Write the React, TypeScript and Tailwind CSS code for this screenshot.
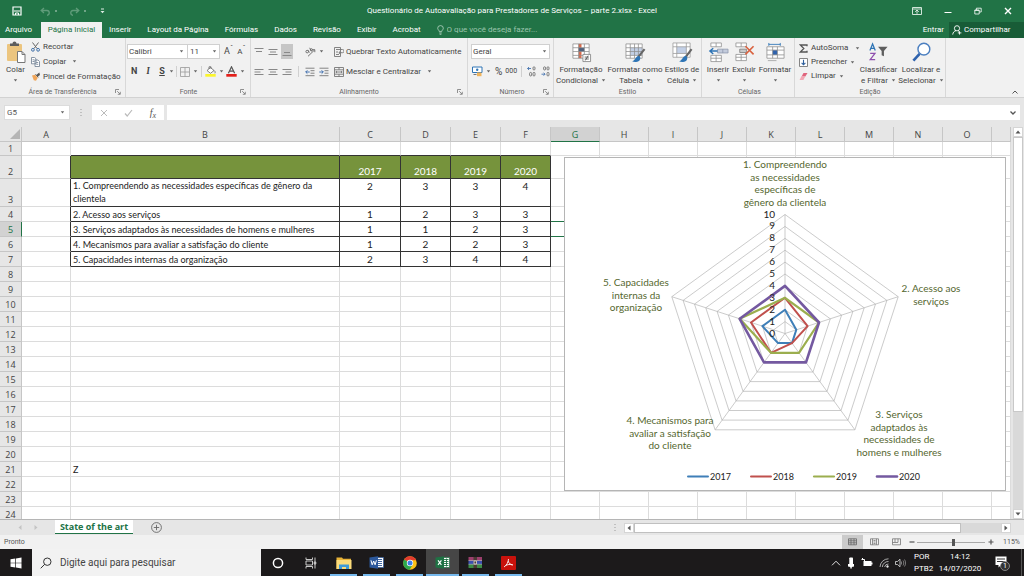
import type { ReactNode } from 'react';
import { useState } from 'react';
import clsx from 'clsx';

const MENU_TABS = ['Inserir', 'Layout da Página', 'Fórmulas', 'Dados', 'Revisão', 'Exibir', 'Acrobat'];
const YEARS = ['2017', '2018', '2019', '2020'];

const INDICATORS = [
  { label: '1. Compreendendo as necessidades específicas de gênero da clientela', values: [2, 3, 3, 4] },
  { label: '2. Acesso aos serviços', values: [1, 2, 3, 3] },
  { label: '3. Serviços adaptados às necessidades de homens e mulheres', values: [1, 1, 2, 3] },
  { label: '4. Mecanismos para avaliar a satisfação do cliente', values: [1, 2, 2, 3] },
  { label: '5. Capacidades internas da organização', values: [2, 3, 4, 4] },
];

const COLUMNS = [
  { name: 'A', width: 'w-[49px]' },
  { name: 'B', width: 'w-[269px]' },
  { name: 'C', width: 'w-[61px]' },
  { name: 'D', width: 'w-[50px]' },
  { name: 'E', width: 'w-[50px]' },
  { name: 'F', width: 'w-[50px]' },
  { name: 'G', width: 'w-[49px]' },
  { name: 'H', width: 'w-[49px]' },
  { name: 'I', width: 'w-[49px]' },
  { name: 'J', width: 'w-[49px]' },
  { name: 'K', width: 'w-[49px]' },
  { name: 'L', width: 'w-[49px]' },
  { name: 'M', width: 'w-[49px]' },
  { name: 'N', width: 'w-[49px]' },
  { name: 'O', width: 'w-[49px]' },
  { name: '', width: '' },
];

const ROWS = Array.from({ length: 24 }, (_, i) => i + 1);

/* ---------- small shared pieces ---------- */

function Caret({ className = '' }: { className?: string }) {
  return (
    <svg viewBox="0 0 5 3" className={clsx('h-[3px] w-[5px] shrink-0', className)} aria-hidden="true">
      <path d="M0.8 0.3h3.4L2.5 2.4z" fill="#666" />
    </svg>
  );
}

function Launcher() {
  return (
    <button type="button" aria-label="Mais opções" className="absolute right-1 bottom-[2px]">
      <svg viewBox="0 0 6 6" className="size-[6px]" fill="none" stroke="#777" strokeWidth="0.8">
        <path d="M0.5 4V0.5H4M2.2 2.2L5 5M5.3 2.8v2.5H2.8" />
      </svg>
    </button>
  );
}

function Group({ label, className, launcher = false, children }: {
  label: string;
  className: string;
  launcher?: boolean;
  children: ReactNode;
}) {
  return (
    <section className={clsx('relative flex shrink-0 flex-col border-r border-[#d8d8d8]', className)}>
      <div className="flex h-[49px] shrink-0 items-start pt-px">{children}</div>
      <p className="text-center text-[7px] leading-[10px] text-[#666]">{label}</p>
      {launcher && <Launcher />}
    </section>
  );
}

function IconButton({ label, caret = false, active = false, children }: {
  label: string;
  caret?: boolean;
  active?: boolean;
  children: ReactNode;
}) {
  return (
    <button
      type="button"
      aria-label={label}
      className={clsx('flex h-[15px] shrink-0 items-center justify-center gap-[3px] px-px', active && 'bg-[#c6c6c6]')}
    >
      {children}
      {caret && <Caret />}
    </button>
  );
}

function BigButton({ lines, icon, className }: {
  lines: string[];
  icon: ReactNode;
  className: string;
}) {
  return (
    <button type="button" className={clsx('flex shrink-0 flex-col items-center text-[8px] leading-[11px] whitespace-nowrap', className)}>
      <span className="mb-px flex h-[22px] items-center">{icon}</span>
      {lines.map((line, i) => (
        <span key={line} className="flex items-center gap-[3px]">
          {line}
          {i > 0 && <Caret />}
        </span>
      ))}
      {lines.length === 1 && <Caret className="mt-1" />}
    </button>
  );
}

function AlignIcon({ rows }: { rows: string }) {
  return (
    <svg viewBox="0 0 10 10" className="size-[10px]" stroke="#888" strokeWidth="1" fill="none">
      <path d={rows} />
    </svg>
  );
}

function GridGlyph({ children }: { children?: ReactNode }) {
  return (
    <svg viewBox="0 0 22 22" className="size-[21px]" fill="none">
      {children}
    </svg>
  );
}

/* ---------- title bar + tabs ---------- */

function TitleBar() {
  return (
    <div className="grid h-[22px] grid-cols-[1fr_auto_1fr] items-center text-[8px] text-white">
      <div className="flex items-center pl-3">
        <button type="button" aria-label="Salvar">
          <svg viewBox="0 0 10 10" className="size-[10px]" fill="none" stroke="#fff">
            <path d="M1 1h8v8H1z" strokeWidth="1.2" />
            <path d="M2 5h6M3.5 9V7h3v2" />
          </svg>
        </button>
        <button type="button" aria-label="Desfazer" className="ml-[18px] flex items-center gap-1 opacity-35">
          <svg viewBox="0 0 11 9" className="h-[9px] w-[11px]" fill="none" stroke="#d5e8dc" strokeWidth="1.3">
            <path d="M4 1L1.2 3.5L4 6M1.5 3.5H7c3 0 3 4.5 0 4.8" />
          </svg>
          <span className="size-[2px] bg-white" />
        </button>
        <button type="button" aria-label="Refazer" className="ml-3 flex items-center gap-1 opacity-35">
          <svg viewBox="0 0 11 9" className="h-[9px] w-[11px]" fill="none" stroke="#d5e8dc" strokeWidth="1.3">
            <path d="M7 1l2.8 2.5L7 6M9.5 3.5H4C1 3.5 1 8 4 8.3" />
          </svg>
          <span className="size-[2px] bg-white" />
        </button>
        <button type="button" aria-label="Personalizar barra" className="ml-[14px]">
          <svg viewBox="0 0 5 6" className="h-[6px] w-[5px]" fill="#dcebe2">
            <path d="M1 0.5h3v1H1zM0.5 3h4L2.5 5.2z" />
          </svg>
        </button>
      </div>
      <h1>Questionário de Autoavaliação para Prestadores de Serviços – parte 2.xlsx - Excel</h1>
      <div className="flex items-center justify-end gap-[22px] pr-3">
        <button type="button" aria-label="Opções da faixa de opções">
          <svg viewBox="0 0 10 8" className="h-2 w-[10px]" fill="none" stroke="#e4f0e9" strokeWidth="0.9">
            <path d="M0.5 0.5h9v7h-9zM0.5 2h9M5 6.8V3.2M3.2 4.8L5 3l1.8 1.8" />
          </svg>
        </button>
        <button type="button" aria-label="Minimizar">
          <svg viewBox="0 0 8 8" className="size-2" stroke="#fff"><path d="M0.5 5.5h7" /></svg>
        </button>
        <button type="button" aria-label="Restaurar">
          <svg viewBox="0 0 8 8" className="size-2" fill="none" stroke="#fff" strokeWidth="0.8">
            <path d="M0.8 3h4.4v4H0.8zM2.4 3V1.2h4.8V5H5.2M0.8 3.4h4.4" />
          </svg>
        </button>
        <button type="button" aria-label="Fechar">
          <svg viewBox="0 0 8 8" className="size-2" stroke="#fff" strokeWidth="1.4"><path d="M1 1l6 6M7 1L1 7" /></svg>
        </button>
      </div>
    </div>
  );
}

function TabBar() {
  return (
    <nav className="flex h-4 items-stretch text-[8px] text-white">
      <button type="button" className="w-[41px] pr-1">Arquivo</button>
      <button type="button" className="w-[61px] bg-[#f1f1f1] text-[#217346]">Página Inicial</button>
      <div className="flex items-center gap-4 pl-[7px]">
        {MENU_TABS.map((tab) => (
          <button key={tab} type="button">{tab}</button>
        ))}
      </div>
      <label className="ml-4 flex items-center gap-[3px]">
        <svg viewBox="0 0 7 10" className="h-[10px] w-[7px]" fill="none" stroke="#b9d6c5" strokeWidth="0.8">
          <path d="M2.3 6.6C2.3 5.3 0.7 4.8 0.7 3.2a2.8 2.6 0 0 1 5.6 0C6.3 4.8 4.7 5.3 4.7 6.6zM2.3 8h2.4M2.6 9.3h1.8" />
        </svg>
        <input
          aria-label="O que você deseja fazer"
          placeholder="O que você deseja fazer..."
          className="w-28 bg-transparent outline-none placeholder:text-[#9cc5ad]"
        />
      </label>
      <button type="button" className="ml-auto pr-[5px]">Entrar</button>
      <button type="button" className="flex w-[75px] items-center gap-[2px] bg-[#185c37] pl-[3px]">
        <svg viewBox="0 0 10 10" className="size-[10px]" fill="none" stroke="#fff" strokeWidth="0.9">
          <circle cx="5" cy="3.3" r="2.6" />
          <path d="M0.7 9.6c0.3-2.3 1.6-3.7 3.3-3.9M6 5.7l1 0.6M7.5 6.2v3.4M5.8 7.9h3.6" />
        </svg>
        Compartilhar
      </button>
    </nav>
  );
}

/* ---------- ribbon ---------- */

function ClipboardGroup() {
  return (
    <Group label="Área de Transferência" className="w-[126px]" launcher>
      <BigButton
        className="ml-1 w-[23px] pt-[2px]"
        lines={['Colar']}
        icon={
          <svg viewBox="0 0 20 22" className="h-[22px] w-5" fill="none">
            <rect x="1" y="3" width="15" height="17" rx="1" fill="#ecc57f" />
            <path d="M4 5V2.5h2.5a2 2 0 0 1 4 0H13V5z" fill="#5d5d5d" />
            <path d="M11.5 10.5h4.5l3 3v8h-7.5z" fill="#fff" stroke="#777" />
            <path d="M16 10.5v3h3" stroke="#777" />
          </svg>
        }
      />
      <div className="ml-1 flex flex-col text-[8px] leading-[15px]">
        <button type="button" className="flex items-center gap-[3px] whitespace-nowrap">
          <svg viewBox="0 0 9 10" className="h-[10px] w-[9px]" fill="none" strokeWidth="1">
            <path d="M1.5 0.5l4.5 6M7.5 0.5L3 6.5" stroke="#666" />
            <circle cx="1.9" cy="7.8" r="1.4" stroke="#3f6fa8" />
            <circle cx="7.1" cy="7.8" r="1.4" stroke="#3f6fa8" />
          </svg>
          Recortar
        </button>
        <button type="button" className="flex items-center gap-[3px] whitespace-nowrap">
          <svg viewBox="0 0 9 10" className="h-[10px] w-[9px]" fill="#fff" stroke="#6b7b8f" strokeWidth="0.8">
            <path d="M0.5 0.5h3.2l1.3 1.3v5H0.5zM4 3h3l1.5 1.5v5H4z" />
            <path d="M5.2 5.5h2M5.2 7.3h2M1.5 2.8h2M1.5 4.5h2" />
          </svg>
          Copiar
          <Caret className="ml-[3px]" />
        </button>
        <button type="button" className="flex items-center gap-[3px] whitespace-nowrap">
          <svg viewBox="0 0 9 10" className="h-[10px] w-[9px]">
            <path d="M5.5 2.8L8.3 0.6L9 3L6.6 4.8z" fill="#555" />
            <path d="M1 3.5l3-0.8l2.8 3L5 8.8L2.8 8.2z" fill="#f0a65a" />
            <path d="M4.5 2.3l2.8 3" stroke="#555" strokeWidth="1" />
          </svg>
          Pincel de Formatação
        </button>
      </div>
    </Group>
  );
}

function FontGroup() {
  return (
    <Group label="Fonte" className="w-[125px] pl-px" launcher>
      <div className="flex flex-col gap-[5px] pt-[5px] text-[8px]">
        <div className="flex items-center">
          <label className="relative flex h-[15px] w-[61px] items-center border border-[#d0d0d0] bg-white">
            <select aria-label="Fonte" className="w-full appearance-none pl-px leading-[13px] outline-none">
              <option>Calibri</option>
            </select>
            <Caret className="absolute right-[3px]" />
          </label>
          <label className="relative flex h-[15px] w-8 items-center border border-l-0 border-[#d0d0d0] bg-white">
            <select aria-label="Tamanho da fonte" className="w-full appearance-none pl-[2px] leading-[13px] outline-none">
              <option>11</option>
            </select>
            <Caret className="absolute right-[2px]" />
          </label>
          <button type="button" aria-label="Aumentar fonte" className="ml-1 text-[9px] leading-[15px]">
            A<sup className="text-[7px]">ˆ</sup>
          </button>
          <button type="button" aria-label="Diminuir fonte" className="ml-1 text-[8px] leading-[15px]">
            A<sup className="text-[7px]">ˇ</sup>
          </button>
        </div>
        <div className="flex items-center pl-1">
          <button type="button" className="w-[6px] text-[9px] font-bold">N</button>
          <button type="button" className="ml-2 w-[6px] font-serif text-[9px] font-bold italic">I</button>
          <button type="button" className="ml-2 w-[6px] text-[9px] font-bold underline">S</button>
          <Caret className="ml-1" />
          <span className="mx-[2px] h-[11px] w-px bg-[#d0d0d0]" />
          <IconButton label="Bordas" caret>
            <svg viewBox="0 0 10 10" className="size-[10px]" fill="none" stroke="#999" strokeWidth="0.8">
              <path d="M0.5 0.5h9v9h-9zM5 0.5v9M0.5 5h9" />
            </svg>
          </IconButton>
          <span className="mx-[2px] h-[11px] w-px bg-[#d0d0d0]" />
          <IconButton label="Cor de preenchimento" caret>
            <svg viewBox="0 0 11 11" className="size-[11px]" fill="none">
              <path d="M2 4.5L5.5 1.5L9 4.5L5.5 7.3z" fill="#fff" stroke="#666" strokeWidth="0.8" />
              <path d="M4 3V0.8h2V3M9.3 4.5c1 1 1 2 .6 2.8" stroke="#666" strokeWidth="0.8" />
              <path d="M0.3 8h10.4v2.7H0.3z" fill="#fbf52c" />
            </svg>
          </IconButton>
          <IconButton label="Cor da fonte" caret>
            <svg viewBox="0 0 11 11" className="size-[11px]" fill="none">
              <path d="M2.4 7.2L5.5 0.8L8.6 7.2M3.6 5.2h3.8" stroke="#555" strokeWidth="1.2" />
              <path d="M0.3 8h10.4v2.7H0.3z" fill="#e3201b" />
            </svg>
          </IconButton>
        </div>
      </div>
    </Group>
  );
}

function AlignmentGroup() {
  return (
    <Group label="Alinhamento" className="w-[217px]" launcher>
      <div className="flex flex-col gap-[5px] pt-[5px] pl-[2px] text-[8px]">
        <div className="flex items-center gap-[2px]">
          <IconButton label="Alinhar em cima"><AlignIcon rows="M0.5 1.5h9M2 4.5h6" /></IconButton>
          <IconButton label="Alinhar no meio"><AlignIcon rows="M0.5 2.5h9M2 5h6M0.5 7.5h9" /></IconButton>
          <IconButton label="Alinhar embaixo" active><AlignIcon rows="M2 5.5h6M0.5 8.5h9" /></IconButton>
          <span className="mx-[3px] h-[11px] w-px" />
          <IconButton label="Orientação" caret>
            <svg viewBox="0 0 11 10" className="h-[10px] w-[11px]" fill="none" stroke="#666" strokeWidth="0.9">
              <path d="M3 9.3L9.5 3M7.3 2.7l2.5 0v2.5" />
              <circle cx="2.2" cy="4.6" r="1.3" />
              <path d="M3 3.2l1.4 2.4M4.6 0.8l2 3.4" />
              <circle cx="6.4" cy="2.8" r="1.1" />
            </svg>
          </IconButton>
        </div>
        <div className="flex items-center gap-[2px]">
          <IconButton label="Alinhar à esquerda"><AlignIcon rows="M0.5 2.5h9M0.5 5h6M0.5 7.5h9" /></IconButton>
          <IconButton label="Centralizar"><AlignIcon rows="M0.5 2.5h9M2 5h6M0.5 7.5h9" /></IconButton>
          <IconButton label="Alinhar à direita"><AlignIcon rows="M0.5 2.5h9M3.5 5h6M0.5 7.5h9" /></IconButton>
          <span className="mx-[3px] h-[11px] w-px bg-[#d0d0d0]" />
          <IconButton label="Diminuir recuo">
            <svg viewBox="0 0 10 10" className="size-[10px]" fill="none" strokeWidth="0.9">
              <path d="M0.5 1.2h9M5.5 3.7h4M5.5 6.2h4M0.5 8.7h9" stroke="#777" />
              <path d="M4.7 5H0.8M2.4 3.3L0.7 5l1.7 1.7" stroke="#2f63a8" />
            </svg>
          </IconButton>
          <IconButton label="Aumentar recuo">
            <svg viewBox="0 0 10 10" className="size-[10px]" fill="none" strokeWidth="0.9">
              <path d="M0.5 1.2h9M5.5 3.7h4M5.5 6.2h4M0.5 8.7h9" stroke="#777" />
              <path d="M0.3 5h3.9M2.6 3.3L4.3 5L2.6 6.7" stroke="#2f63a8" />
            </svg>
          </IconButton>
        </div>
      </div>
      <div className="ml-1 flex flex-col gap-[5px] pt-[5px] text-[8px] leading-[15px]">
        <button type="button" className="flex items-center gap-[2px] whitespace-nowrap">
          <svg viewBox="0 0 10 10" className="size-[10px]" fill="none" stroke="#777" strokeWidth="0.9">
            <path d="M0.5 0.5h6v9h-6zM2 2.5h6.5a1 1 0 0 1 0 3.2H5M6.4 4.2L4.8 5.7l1.6 1.5M2 5h2M2 7.5h3" />
          </svg>
          Quebrar Texto Automaticamente
        </button>
        <button type="button" className="flex items-center gap-[2px] whitespace-nowrap">
          <svg viewBox="0 0 10 10" className="size-[10px]" fill="none" stroke="#777" strokeWidth="0.9">
            <path d="M0.5 0.5h9v9h-9zM0.5 2.8h9M0.5 7.2h9M5 0.5v2.3M5 7.2v2.3M1.8 5h6.4M3 4L1.8 5L3 6M7 4l1.2 1L7 6" />
          </svg>
          Mesclar e Centralizar
          <Caret className="ml-1" />
        </button>
      </div>
    </Group>
  );
}

function NumberGroup() {
  return (
    <Group label="Número" className="w-[86px] pl-[3px]" launcher>
      <div className="flex flex-col gap-[5px] pt-[5px] text-[8px]">
        <label className="relative flex h-[15px] w-[79px] items-center border border-[#d0d0d0] bg-white">
          <select aria-label="Formato de número" className="w-full appearance-none pl-px leading-[13px] outline-none">
            <option>Geral</option>
          </select>
          <Caret className="absolute right-[2px]" />
        </label>
        <div className="flex items-center gap-[3px]">
          <IconButton label="Formato de contabilização" caret>
            <svg viewBox="0 0 11 11" className="size-[11px]" fill="none">
              <path d="M0.5 1h9.5v5.5H0.5z" fill="#fff" stroke="#2e74b5" />
              <circle cx="5.2" cy="3.8" r="1.2" fill="#2e74b5" />
              <path d="M5 6.5h4.5v3.7H5z" fill="#f0b45c" />
              <path d="M1.5 8.5h3" stroke="#777" />
            </svg>
          </IconButton>
          <button type="button" className="text-[10px] leading-[15px]">%</button>
          <button type="button" className="text-[7px] leading-[15px]">000</button>
          <span className="mx-px h-[11px] w-px bg-[#d0d0d0]" />
          <IconButton label="Aumentar casas decimais">
            <svg viewBox="0 0 9 11" className="h-[11px] w-[9px]" fill="none" stroke="#666" strokeWidth="0.8">
              <path d="M4 2.5H0.7M2 1L0.6 2.5L2 4" stroke="#2f63a8" />
              <rect x="6" y="0.8" width="2" height="3.2" rx="1" />
              <rect x="2.6" y="6.4" width="2" height="3.6" rx="1" />
              <rect x="6" y="6.4" width="2" height="3.6" rx="1" />
            </svg>
          </IconButton>
          <IconButton label="Diminuir casas decimais">
            <svg viewBox="0 0 9 11" className="h-[11px] w-[9px]" fill="none" stroke="#666" strokeWidth="0.8">
              <rect x="2.6" y="0.8" width="2" height="3.2" rx="1" />
              <rect x="6" y="0.8" width="2" height="3.2" rx="1" />
              <path d="M0.5 8.2h3.4M2.6 6.7L4 8.2L2.6 9.7" stroke="#2f63a8" />
              <rect x="6" y="6.4" width="2" height="3.6" rx="1" />
            </svg>
          </IconButton>
        </div>
      </div>
    </Group>
  );
}

function StyleGroup() {
  return (
    <Group label="Estilo" className="w-[148px]">
      <BigButton
        className="w-[54px] pt-[2px]"
        lines={['Formatação', 'Condicional']}
        icon={
          <GridGlyph>
            <path d="M2 2h17v15H2z" fill="#fff" />
            <path d="M8 2h3v15H8z" fill="#d96a4b" />
            <path d="M8 6h6v4H8z" fill="#4d5f7c" />
            <path d="M2 2h17v15H2zM2 6h17M2 10h17M2 14h17M8 2v15M14 2v15" stroke="#8c8c8c" strokeWidth="0.8" />
            <path d="M12.5 13h8v7.5h-8z" fill="#fff" stroke="#777" strokeWidth="0.8" />
            <path d="M14.3 15.8h4.4M14.3 17.8h4.4M18 14.3l-3 5" stroke="#444" strokeWidth="0.8" />
          </GridGlyph>
        }
      />
      <BigButton
        className="w-[54px] pt-[2px]"
        lines={['Formatar como', 'Tabela']}
        icon={
          <GridGlyph>
            <path d="M1 2h17v15H1z" fill="#fff" />
            <path d="M5.5 6H18v8H5.5z" fill="#c3d0e6" />
            <path d="M1 2h17v15H1zM1 6h17M1 10h17M1 14h17M5.5 2v15M10 2v15M14 2v15" stroke="#8c8c8c" strokeWidth="0.8" />
            <path d="M20.5 7.5L14 15.5" stroke="#666" strokeWidth="2.2" />
            <path d="M14.5 14.5c-3 0-3 4-7 6c3 1 9 1 8.5-4.5z" fill="#2e74b5" />
          </GridGlyph>
        }
      />
      <BigButton
        className="w-[40px] pt-[2px]"
        lines={['Estilos de', 'Célula']}
        icon={
          <GridGlyph>
            <path d="M1 1h18v15H1z" fill="#fff" />
            <path d="M5 5h10v7H5z" fill="#c3d0e6" />
            <path d="M1 1h18v15H1zM1 5h18M1 12h18M5 1v15M15 1v15" stroke="#9a9a9a" strokeWidth="0.8" />
            <path d="M20.5 7.5L14.5 15.5" stroke="#666" strokeWidth="2.2" />
            <path d="M14.5 14.5c-3 0-3 4-7 6c3 1 9 1 8.5-4.5z" fill="#2e74b5" />
          </GridGlyph>
        }
      />
    </Group>
  );
}

function CellsGroup() {
  return (
    <Group label="Células" className="w-[93px] pl-[3px]">
      <BigButton
        className="w-[26px] pt-[2px]"
        lines={['Inserir']}
        icon={
          <GridGlyph>
            <path d="M3 1h11v4H3zM8.5 1v4M3 14h11v6.5H3zM8.5 14v6.5M3 17h11" fill="#fff" stroke="#8c8c8c" strokeWidth="0.8" />
            <path d="M10 7.5h11v4H10zM15.5 7.5v4" fill="#c3cbdc" stroke="#8c96ab" strokeWidth="0.8" />
            <path d="M10 9.5H2.5M5.5 6.5l-3.5 3l3.5 3" stroke="#2e74b5" strokeWidth="1.5" />
          </GridGlyph>
        }
      />
      <BigButton
        className="w-[26px] pt-[2px]"
        lines={['Excluir']}
        icon={
          <GridGlyph>
            <path d="M2 1h11v4H2zM7.5 1v4M2 13h11v6.5H2zM7.5 13v6.5M2 16h11" fill="#fff" stroke="#8c8c8c" strokeWidth="0.8" />
            <path d="M6 7.5h7v3.5H6z" fill="#c9c9c9" stroke="#777" strokeWidth="0.8" />
            <path d="M12 4.5l8.5 8.5M20.5 4.5L12 13" stroke="#d9623f" strokeWidth="1.7" />
          </GridGlyph>
        }
      />
      <BigButton
        className="w-[36px] pt-[2px]"
        lines={['Formatar']}
        icon={
          <GridGlyph>
            <path d="M4 2.5h12M4 1v3M16 1v3" stroke="#2e74b5" strokeWidth="0.9" />
            <path d="M2 5h18v12H2z" fill="#fff" />
            <path d="M8 8.5h5v5H8z" fill="#2e62ad" />
            <path d="M2 5h18v12H2zM2 8.5h18M2 13.5h18M8 5v12M13 5v12" stroke="#8c8c8c" strokeWidth="0.8" />
            <path d="M3 19.5h9" stroke="#999" strokeWidth="0.8" />
          </GridGlyph>
        }
      />
    </Group>
  );
}

function EditingGroup() {
  return (
    <Group label="Edição" className="w-[151px]">
      <div className="ml-1 flex w-[62px] flex-col pt-[2px] text-[8px] leading-[14px]">
        <button type="button" className="flex items-center gap-[3px] whitespace-nowrap">
          <svg viewBox="0 0 9 9" className="size-[9px]" fill="none" stroke="#555" strokeWidth="1.3">
            <path d="M8 2.3V1H1.3L4.8 4.5L1.3 8H8V6.7" />
          </svg>
          AutoSoma
          <Caret className="ml-1" />
        </button>
        <button type="button" className="flex items-center gap-[3px] whitespace-nowrap">
          <svg viewBox="0 0 9 9" className="size-[9px]" fill="#fff" stroke="#777" strokeWidth="0.9">
            <path d="M0.5 0.5h8v8h-8z" />
            <path d="M4.5 1.8v4.8M2.6 4.9l1.9 1.9l1.9-1.9" fill="none" stroke="#2e5f9c" strokeWidth="1.1" />
          </svg>
          Preencher
          <Caret />
        </button>
        <button type="button" className="flex items-center gap-[3px] whitespace-nowrap">
          <svg viewBox="0 0 9 9" className="size-[9px]">
            <path d="M4.5 1h4L6.3 4.5H2.6z" fill="#e0647c" />
            <path d="M2.4 4.3h4L4.4 8H0.6z" fill="#f2a8b4" />
          </svg>
          Limpar
          <Caret />
        </button>
      </div>
      <BigButton
        className="w-[35px] pt-[2px]"
        lines={['Classificar', 'e Filtrar']}
        icon={
          <GridGlyph>
            <path d="M2 9L4.8 2L7.6 9M3 6.8h3.6" stroke="#2e74b5" strokeWidth="1.3" />
            <path d="M2.3 12h5L2.3 18.5h5.2" stroke="#8e4fae" strokeWidth="1.3" />
            <path d="M10.5 5h10l-3.8 4.5v5.5l-2.4-1.2V9.5z" fill="#5e5e5e" />
          </GridGlyph>
        }
      />
      <BigButton
        className="ml-1 w-[42px] pt-[2px]"
        lines={['Localizar e', 'Selecionar']}
        icon={
          <GridGlyph>
            <circle cx="13.5" cy="7.5" r="6.2" fill="#fff" stroke="#4b7fc0" strokeWidth="1.5" />
            <path d="M9 12.5L2.5 19.5" stroke="#2e62ad" strokeWidth="2.8" />
          </GridGlyph>
        }
      />
    </Group>
  );
}

function Ribbon() {
  return (
    <div className="relative flex h-[60px] shrink-0 overflow-hidden border-b border-[#d2d2d2] bg-[#f1f1f1] text-[#444]">
      <ClipboardGroup />
      <FontGroup />
      <AlignmentGroup />
      <NumberGroup />
      <StyleGroup />
      <CellsGroup />
      <EditingGroup />
      <button type="button" aria-label="Recolher faixa" className="mt-auto mr-[6px] mb-[3px] ml-auto">
        <svg viewBox="0 0 6 4" className="h-1 w-[6px]" fill="none" stroke="#555"><path d="M0.5 3.5L3 1l2.5 2.5" /></svg>
      </button>
    </div>
  );
}

function FormulaBar() {
  return (
    <div className="flex h-[29px] shrink-0 items-center bg-[#e6e6e6] px-1 text-[#555]">
      <label className="flex h-[15px] w-[66px] items-center border border-[#dcdcdc] bg-white pr-1">
        <input aria-label="Caixa de nome" defaultValue="G5" className="min-w-0 flex-1 pl-[2px] text-[8px] outline-none" />
        <Caret />
      </label>
      <svg viewBox="0 0 2 8" className="mx-[10px] h-2 w-[2px]" fill="#999">
        <path d="M0.5 0h1v1h-1zM0.5 3h1v1h-1zM0.5 6h1v1h-1z" />
      </svg>
      <div className="flex h-[15px] w-[72px] items-center justify-between bg-white px-2">
        <button type="button" aria-label="Cancelar">
          <svg viewBox="0 0 8 8" className="size-2" stroke="#bbb"><path d="M1 1l6 6M7 1L1 7" /></svg>
        </button>
        <button type="button" aria-label="Inserir">
          <svg viewBox="0 0 9 8" className="h-2 w-[9px]" fill="none" stroke="#bbb" strokeWidth="1.2"><path d="M1 4.5L3.2 7L8 1" /></svg>
        </button>
        <button type="button" className="font-['Liberation_Serif',serif] text-[10px] leading-[15px] italic">
          f<sub className="text-[8px]">x</sub>
        </button>
      </div>
      <label className="ml-[3px] flex h-[15px] flex-1 items-center bg-white pr-1">
        <input aria-label="Barra de fórmulas" className="min-w-0 flex-1 text-[8px] outline-none" />
        <svg viewBox="0 0 6 4" className="h-1 w-[6px]" fill="none" stroke="#555" strokeWidth="1.3"><path d="M0.5 0.5L3 3l2.5-2.5" /></svg>
      </label>
    </div>
  );
}

/* ---------- worksheet ---------- */

function rowHeight(row: number) {
  if (row === 1) return 'h-[14px]';
  if (row === 2) return 'h-[23px]';
  if (row === 3) return 'h-7';
  return 'h-[15px]';
}

function cellContent(row: number, col: number) {
  if (row === 2 && col >= 2 && col <= 5) return YEARS[col - 2];
  if (row >= 3 && row <= 7) {
    const item = INDICATORS[row - 3];
    if (col === 1) return item.label;
    if (col >= 2 && col <= 5) return item.values[col - 2];
  }
  if (row === 21 && col === 1) return 'Z';
  return null;
}

function cellClass(row: number, col: number) {
  const inTable = row >= 2 && row <= 7 && col >= 1 && col <= 5;
  const darkRight = row >= 2 && row <= 7 && col <= 5;
  const darkBottom = row <= 7 && col >= 1 && col <= 5;
  const selected = col === 6 && (row === 4 || row === 5);
  return clsx(
    'border-r border-b p-0',
    darkRight ? 'border-r-[#333]' : 'border-r-[#dcdcdc]',
    selected ? 'border-b-[#217346]' : darkBottom ? 'border-b-[#333]' : 'border-b-[#dcdcdc]',
    inTable && row === 2 && 'bg-[#76933c] align-bottom text-white',
    row === 3 ? 'align-top' : row !== 2 && 'align-middle',
    col === 1 ? 'pl-[2px] text-[9px] leading-[13px]' : 'text-center text-[10px] leading-[14px]',
  );
}

function SheetTable() {
  return (
    <table className="w-full table-fixed border-separate border-spacing-0 font-[Lato,sans-serif] text-[#222]">
      <colgroup>
        <col className="w-[22px]" />
        {COLUMNS.map((col, i) => (
          <col key={i} className={col.width} />
        ))}
      </colgroup>
      <thead>
        <tr className="h-[15px] bg-[#e6e6e6] font-['Open_Sans',sans-serif] text-[9px] leading-[13px] text-[#444]">
          <th className="border-r border-b border-[#c6c6c6] p-0" aria-label="Selecionar tudo">
            <svg viewBox="0 0 10 10" className="ml-auto mr-px size-[10px]"><path d="M10 0v10H0z" fill="#b5b5b5" /></svg>
          </th>
          {COLUMNS.map((col, i) => (
            <th
              key={i}
              scope="col"
              className={clsx(
                'border-r border-b p-0 text-center font-normal',
                col.name === 'G' ? 'border-r-[#c6c6c6] border-b-[#217346] bg-[#d2d2d2] text-[#217346]' : 'border-[#c6c6c6]',
              )}
            >
              {col.name}
            </th>
          ))}
        </tr>
      </thead>
      <tbody>
        {ROWS.map((row) => (
          <tr key={row} className={rowHeight(row)}>
            <th
              scope="row"
              className={clsx(
                "border-r border-b p-0 text-center align-bottom font-['Open_Sans',sans-serif] text-[9px] leading-3 font-normal",
                row === 5 ? 'border-r-[#217346] border-b-[#c6c6c6] bg-[#d2d2d2] text-[#217346]' : 'border-[#c6c6c6] bg-[#e6e6e6] text-[#444]',
              )}
            >
              {row}
            </th>
            {COLUMNS.map((_, col) => (
              <td key={col} className={cellClass(row, col)}>{cellContent(row, col)}</td>
            ))}
          </tr>
        ))}
      </tbody>
    </table>
  );
}

const CENTER = { x: 220, y: 175.5 };
const RADIUS = 119;

const SERIES = [
  { name: '2017', color: '#3f7fb8', width: 2, legendX: 123 },
  { name: '2018', color: '#c0504d', width: 2, legendX: 186 },
  { name: '2019', color: '#9bae4e', width: 2.2, legendX: 249 },
  { name: '2020', color: '#7459a0', width: 2.6, legendX: 312 },
];

const AXIS_LABELS = [
  { x: 220, y: 10, lines: ['1. Compreendendo', 'as necessidades', 'específicas de', 'gênero da clientela'] },
  { x: 366, y: 134, lines: ['2. Acesso aos', 'serviços'] },
  { x: 334, y: 260, lines: ['3. Serviços', 'adaptados às', 'necessidades de', 'homens e mulheres'] },
  { x: 105, y: 266, lines: ['4. Mecanismos para', 'avaliar a satisfação', 'do cliente'] },
  { x: 71, y: 128, lines: ['5. Capacidades', 'internas da', 'organização'] },
];

function point(axis: number, value: number) {
  const angle = (-90 + axis * 72) * (Math.PI / 180);
  const r = (RADIUS * value) / 10;
  return `${(CENTER.x + r * Math.cos(angle)).toFixed(1)},${(CENTER.y + r * Math.sin(angle)).toFixed(1)}`;
}

function ring(values: number[]) {
  return values.map((value, axis) => point(axis, value)).join(' ');
}

function RadarChart() {
  return (
    <figure className="absolute top-[30px] left-[564px] w-[442px] border border-[#b5b5b5] bg-white">
      <svg viewBox="0 0 440 332" className="block w-full font-[Lato,sans-serif] text-[9px]" role="img" aria-label="Gráfico de radar">
        <g fill="none" stroke="#b5b5b5" strokeWidth="0.7">
          {[1, 2, 3, 4, 5, 6, 7, 8, 9, 10].map((level) => (
            <polygon key={level} points={ring([level, level, level, level, level])} />
          ))}
          {[0, 1, 2, 3, 4].map((axis) => (
            <polyline key={axis} points={`${CENTER.x},${CENTER.y} ${point(axis, 10)}`} />
          ))}
        </g>
        {SERIES.map((series, i) => (
          <g key={series.name}>
            <polygon
              points={ring(INDICATORS.map((item) => item.values[i]))}
              fill="none"
              stroke={series.color}
              strokeWidth={series.width}
              strokeLinejoin="round"
            />
            <path d={`M${series.legendX} 318.5h20`} stroke={series.color} strokeWidth={series.width} strokeLinecap="round" />
            <text x={series.legendX + 22} y="322" fill="#222">{series.name}</text>
          </g>
        ))}
        <g textAnchor="end" fill="#222" className="text-[10px]">
          {[0, 1, 2, 3, 4, 5, 6, 7, 8, 9, 10].map((level) => (
            <text key={level} x="210" y={CENTER.y + 3 - level * 11.9}>{level}</text>
          ))}
        </g>
        <g textAnchor="middle" fill="#55672f" className="text-[10px]">
          {AXIS_LABELS.map((label) =>
            label.lines.map((line, i) => (
              <text key={line} x={label.x} y={label.y + i * 12.5}>{line}</text>
            )),
          )}
        </g>
      </svg>
    </figure>
  );
}

function Arrow({ d, label }: { d: string; label: string }) {
  return (
    <button type="button" aria-label={label} className="flex size-[10px] shrink-0 items-center justify-center border border-[#d5d5d5] bg-white">
      <svg viewBox="0 0 6 6" className="size-[6px]" fill="#555"><path d={d} /></svg>
    </button>
  );
}

function Worksheet() {
  return (
    <div className="flex min-h-0 flex-1 bg-[#e6e6e6]">
      <div className="relative min-w-0 flex-1 overflow-hidden bg-white">
        <SheetTable />
        <RadarChart />
      </div>
      <div className="flex w-[13px] flex-col items-center">
        <Arrow label="Rolar para cima" d="M0.5 4.5h5L3 1.5z" />
        <div className="flex w-[10px] flex-1 flex-col bg-[#d9d9d9]">
          <div className="h-[74%] border border-[#c8c8c8] bg-white" />
        </div>
        <Arrow label="Rolar para baixo" d="M0.5 1.5h5L3 4.5z" />
      </div>
    </div>
  );
}

function SheetTabs() {
  return (
    <div className="flex h-4 shrink-0 items-center border-t border-[#b5b5b5] bg-[#e6e6e6]">
      <div className="flex w-[55px] justify-center gap-3">
        <svg viewBox="0 0 4 5" className="h-[5px] w-1" fill="#c4c4c4"><path d="M3.5 0v5L0.5 2.5z" /></svg>
        <svg viewBox="0 0 4 5" className="h-[5px] w-1" fill="#c4c4c4"><path d="M0.5 0v5l3-2.500z" /></svg>
      </div>
      <button type="button" className="h-[14px] w-[78px] self-start border-b border-[#217346] bg-white font-['Open_Sans',sans-serif] text-[9px] leading-[11px] font-bold text-[#217346]">
        State of the art
      </button>
      <button type="button" aria-label="Nova planilha" className="ml-[18px]">
        <svg viewBox="0 0 11 11" className="size-[11px]" fill="none" stroke="#666" strokeWidth="0.9">
          <circle cx="5.5" cy="5.5" r="4.9" />
          <path d="M5.5 2.8v5.4M2.8 5.5h5.4" />
        </svg>
      </button>
      <div className="ml-auto flex w-[40%] items-center">
        <svg viewBox="0 0 2 8" className="mr-2 h-2 w-[2px]" fill="#999">
          <path d="M0.5 0h1v1h-1zM0.5 3h1v1h-1zM0.5 6h1v1h-1z" />
        </svg>
        <Arrow label="Rolar para a esquerda" d="M4.5 0.5v5L1.5 3z" />
        <div className="flex h-[10px] flex-1 bg-[#d9d9d9]">
          <div className="w-[89%] border border-[#c0c0c0] bg-white" />
        </div>
        <Arrow label="Rolar para a direita" d="M1.5 0.5v5l3-2.500z" />
        <span className="w-[13px]" />
      </div>
    </div>
  );
}

function StatusBar() {
  const [zoom, setZoom] = useState(115);
  return (
    <div className="flex h-[14px] shrink-0 items-center bg-[#f1f1f1] text-[7px] text-[#555]">
      <span className="pl-1">Pronto</span>
      <div className="ml-auto flex items-center">
        <button type="button" aria-label="Normal" className="flex h-[14px] w-[21px] items-center justify-center bg-[#cbcbcb]">
          <svg viewBox="0 0 9 8" className="h-2 w-[9px]" fill="none" stroke="#666" strokeWidth="0.8">
            <path d="M0.5 0.8h8v6h-8zM0.5 2.8h8M0.5 4.8h8M3 0.8v6M6 0.8v6" />
          </svg>
        </button>
        <button type="button" aria-label="Layout da página" className="flex w-[22px] justify-center">
          <svg viewBox="0 0 9 8" className="h-2 w-[9px]" fill="none" stroke="#777" strokeWidth="0.8">
            <path d="M0.5 0.8h8v6h-8zM2.5 0.8v6M6.5 0.8v6M3.5 2.5h2M3.5 4h2M3.5 5.5h2" />
          </svg>
        </button>
        <button type="button" aria-label="Quebra de página" className="flex w-[22px] justify-center">
          <svg viewBox="0 0 9 8" className="h-2 w-[9px]" fill="none" stroke="#777" strokeWidth="0.8">
            <path d="M0.5 0.8h8v6h-8zM3 0.8v3.5M6 0.8v3.5M0.5 4.5H6" />
          </svg>
        </button>
        <button type="button" aria-label="Reduzir" className="flex w-[10px] justify-center">
          <svg viewBox="0 0 6 6" className="size-[6px]" stroke="#555" strokeWidth="1.2"><path d="M0.5 3h5" /></svg>
        </button>
        <input
          type="range"
          aria-label="Zoom"
          min={10}
          max={205}
          value={zoom}
          onChange={(e) => setZoom(Number(e.target.value))}
          className="h-2 w-[68px] appearance-none bg-transparent bg-[linear-gradient(#a8a8a8,#a8a8a8)] bg-[length:100%_1px] bg-center bg-no-repeat [&::-webkit-slider-thumb]:h-[7px] [&::-webkit-slider-thumb]:w-[3px] [&::-webkit-slider-thumb]:appearance-none [&::-webkit-slider-thumb]:bg-[#555]"
        />
        <button type="button" aria-label="Ampliar" className="flex w-3 justify-center">
          <svg viewBox="0 0 6 6" className="size-[6px]" stroke="#555" strokeWidth="1.2"><path d="M0.5 3h5M3 0.5v5" /></svg>
        </button>
        <span className="w-[27px] pr-1 text-right">{zoom}%</span>
      </div>
    </div>
  );
}

/* ---------- taskbar ---------- */

function TaskButton({ label, running = false, active = false, children }: {
  label: string;
  running?: boolean;
  active?: boolean;
  children: ReactNode;
}) {
  return (
    <button
      type="button"
      aria-label={label}
      className={clsx('relative flex w-[33px] shrink-0 items-center justify-center', active && 'bg-[#464646]')}
    >
      {children}
      {running && <span className={clsx('absolute bottom-0 h-[2px] bg-[#76b9ed]', active ? 'inset-x-0' : 'inset-x-[3px]')} />}
    </button>
  );
}

function Taskbar() {
  return (
    <div className="flex h-[27px] shrink-0 items-stretch bg-[#1c1a1b] text-white">
      <button type="button" aria-label="Iniciar" className="flex w-8 items-center justify-center">
        <svg viewBox="0 0 12 12" className="size-3" fill="#fff">
          <path d="M0.5 2.2L5.3 1.5v4.2H0.5zM6 1.4L11.5 0.6v5.1H6zM0.5 6.3h4.8v4.2L0.5 9.8zM6 6.3h5.5v5.1L6 10.6z" />
        </svg>
      </button>
      <label className="flex w-[229px] items-center gap-2 bg-[#f2f2f2] pl-2">
        <svg viewBox="0 0 12 12" className="size-3" fill="none" stroke="#333">
          <circle cx="7.3" cy="4.7" r="3.7" />
          <path d="M4.7 7.3L0.7 11.3" />
        </svg>
        <input aria-label="Pesquisar" placeholder="Digite aqui para pesquisar" className="flex-1 text-[10px] outline-none placeholder:text-[#444]" />
      </label>
      <TaskButton label="Cortana">
        <svg viewBox="0 0 12 12" className="size-3" fill="none" stroke="#fff" strokeWidth="1.5"><circle cx="6" cy="6" r="4.6" /></svg>
      </TaskButton>
      <TaskButton label="Visão de tarefas">
        <svg viewBox="0 0 12 12" className="size-3" fill="none" stroke="#ddd" strokeWidth="0.9">
          <path d="M1 0.5v2h6.5v-2M1 11.5v-2h6.5v2M1 4h6.5v4H1zM10 0.5v11M9.2 5h1.6v2H9.2z" />
        </svg>
      </TaskButton>
      <TaskButton label="Explorador de Arquivos" running>
        <svg viewBox="0 0 16 14" className="h-[14px] w-4">
          <path d="M0.5 1.5h5.5l1 1.3h8v10.2H0.5z" fill="#e8b338" />
          <path d="M0.5 4h15v9H0.5z" fill="#fbdc7b" />
          <path d="M3 13V8.5h10V13h-3v-2H6v2z" fill="#3f9bd8" />
        </svg>
      </TaskButton>
      <TaskButton label="Word" running>
        <svg viewBox="0 0 15 13" className="h-[13px] w-[15px]">
          <path d="M8 1.5h6.5v10H8z" fill="#fff" stroke="#2b579a" strokeWidth="0.7" />
          <path d="M9 3.5h4M9 5.5h4M9 7.5h4M9 9.5h4" stroke="#2b579a" strokeWidth="0.9" />
          <path d="M0.5 1.5L9 0.2v12.6L0.5 11.5z" fill="#2b579a" />
          <path d="M2 4.3l1.2 4.5L4.7 5l1.4 3.8L7.4 4.3" fill="none" stroke="#fff" />
        </svg>
      </TaskButton>
      <TaskButton label="Chrome" running>
        <svg viewBox="0 0 14 14" className="size-[14px]">
          <circle cx="7" cy="7" r="6.8" fill="#fbc116" />
          <path d="M7 7L1.1 3.6A6.8 6.8 0 0 1 12.9 3.6L13.2 4.2H7z" fill="#e33b2e" />
          <path d="M1.1 3.6A6.8 6.8 0 0 0 6.6 13.8L9.8 8.5L7 7z" fill="#2da94f" />
          <circle cx="7" cy="7" r="3.2" fill="#fff" />
          <circle cx="7" cy="7" r="2.5" fill="#3d7fe6" />
        </svg>
      </TaskButton>
      <TaskButton label="Excel" running active>
        <svg viewBox="0 0 15 13" className="h-[13px] w-[15px]">
          <path d="M8 1.5h6.5v10H8z" fill="#fff" stroke="#1f7244" strokeWidth="0.7" />
          <path d="M9 3.5h4.5M9 5.5h4.5M9 7.5h4.5M9 9.5h4.5M11.5 2.5v8" stroke="#1f7244" strokeWidth="0.9" />
          <path d="M0.5 1.5L9 0.2v12.6L0.5 11.5z" fill="#1f7244" />
          <path d="M3 4.3l3.4 4.5M6.4 4.3L3 8.8" stroke="#fff" strokeWidth="1.1" />
        </svg>
      </TaskButton>
      <TaskButton label="WinRAR" running>
        <svg viewBox="0 0 15 13" className="h-[13px] w-[15px]">
          <path d="M0.5 1h13.5v3.8H0.5z" fill="#9c3f6d" />
          <path d="M0.5 4.8h13.5v3.5H0.5z" fill="#3b4fae" />
          <path d="M0.5 8.3h13.5V12H0.5z" fill="#3d8b46" />
          <path d="M5.5 1h3.5v11H5.5z" fill="#4b3a35" />
          <path d="M6 5h2.5v3H6z" fill="none" stroke="#ddd" strokeWidth="0.8" />
          <path d="M0.5 4.5h13.5M0.5 8.3h13.5" stroke="#ddd" strokeWidth="0.5" />
        </svg>
      </TaskButton>
      <TaskButton label="Acrobat" running>
        <svg viewBox="0 0 15 14" className="h-[14px] w-[15px]">
          <rect width="15" height="14" rx="1" fill="#c8120c" />
          <path d="M3 11c2.5-1.5 4.5-5 4.5-8M7 5c1 2.5 3 4 5 4M4.5 9.5c2-1 4.5-1.3 7-0.8" fill="none" stroke="#fff" strokeWidth="0.9" />
        </svg>
      </TaskButton>

      <div className="ml-auto flex items-center text-[8px] leading-3">
        <div className="flex items-center gap-[6px] pr-2">
          <svg viewBox="0 0 10 6" className="h-[6px] w-[10px]" fill="none" stroke="#ddd"><path d="M1 5.3L5 1.2l4 4.1" /></svg>
          <svg viewBox="0 0 8 12" className="h-3 w-2" fill="#fff">
            <rect x="2.3" y="0.5" width="3.7" height="7.5" rx="0.8" />
            <path d="M1 7h6v2.5L4.8 10v1.5H3.3V10L1 9.5z" />
          </svg>
          <svg viewBox="0 0 12 9" className="h-[9px] w-3">
            <path d="M2.5 3h8v5h-8zM10.5 4.5h1v2h-1z" fill="#fff" />
            <path d="M0.5 1.5h3v2M1.5 0v2" stroke="#fff" fill="none" />
          </svg>
          <svg viewBox="0 0 10 10" className="size-[10px]" fill="none" stroke="#bbb" strokeWidth="0.9">
            <path d="M1 9A8.5 8.5 0 0 1 9.5 0.8M3.3 9A6 6 0 0 1 9.5 3.5M5.6 9A3.8 3.8 0 0 1 9.5 6" />
            <circle cx="8.5" cy="8.5" r="0.9" fill="#fff" />
          </svg>
          <svg viewBox="0 0 11 10" className="h-[10px] w-[11px]" fill="none" stroke="#ddd" strokeWidth="0.8">
            <path d="M0.5 3.5h2L5 1.2v7.6L2.5 6.5h-2z" />
            <path d="M6.5 3.5v3M8 2.5c1 1.5 1 3.5 0 5M9.5 1.5c1.4 2 1.4 5 0 7" opacity="0.6" />
          </svg>
        </div>
        <p className="w-5">POR<br />PTB2</p>
        <p className="w-[52px] text-center">14:12<br />14/07/2020</p>
        <button type="button" aria-label="Notificações" className="relative ml-1 flex w-[31px] justify-center pr-2">
          <svg viewBox="0 0 16 16" className="size-4">
            <path d="M1.5 1.5h11v8.5H7l-2.5 2.5V10h-3z" fill="#fff" />
            <path d="M3 4h8M3 6.5h8" stroke="#1c1a1b" strokeWidth="0.9" />
            <circle cx="11" cy="11" r="4.5" fill="#333" stroke="#aaa" strokeWidth="0.7" />
          </svg>
          <span className="absolute top-[5px] right-[14px] text-[7px] leading-3">1</span>
        </button>
        <span className="mr-[2px] h-[27px] w-px bg-[#555]" />
      </div>
    </div>
  );
}

export default function App() {
  return (
    <main className="flex h-screen flex-col overflow-hidden bg-[#e6e6e6] font-[Roboto,sans-serif]">
      <header className="shrink-0 bg-[#217346]">
        <TitleBar />
        <TabBar />
      </header>
      <Ribbon />
      <FormulaBar />
      <Worksheet />
      <SheetTabs />
      <StatusBar />
      <Taskbar />
    </main>
  );
}
